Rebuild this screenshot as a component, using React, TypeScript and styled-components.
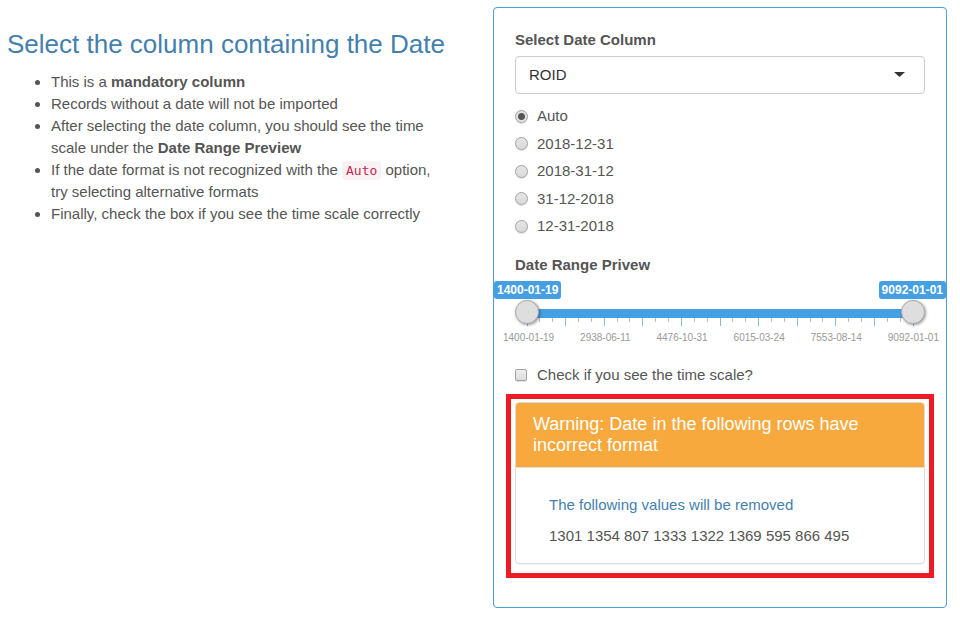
import React, { useState } from "react";
import styled, { createGlobalStyle } from "styled-components";

const GlobalStyle = createGlobalStyle`
  *, *::before, *::after { box-sizing: border-box; }
  body {
    margin: 0;
    background: #fff;
    color: #555;
    font-family: "Liberation Sans", Arial, sans-serif;
    font-size: 15px;
    line-height: 22px;
  }
  h2, h3, h4, p, ul, fieldset { margin: 0; padding: 0; border: 0; }
`;

const Page = styled.main`
  display: grid;
  grid-template-columns: minmax(0, 1fr) minmax(0, 1fr);
  align-items: start;
  gap: 32px;
  padding: 7px 13px 20px 7px;
`;

const Instructions = styled.section`
  padding-top: 22px;
`;

const Title = styled.h2`
  color: #447fae;
  font-size: 26px;
  font-weight: 400;
  line-height: 30px;
  white-space: nowrap;
`;

const Notes = styled.ul`
  && {
    margin-top: 12px;
    padding: 0 16px 0 44px;
  }
`;

const Code = styled.code`
  padding: 2px 4px;
  border-radius: 4px;
  background: #f9f2f4;
  color: #c7254e;
  font-family: "DejaVu Sans Mono", monospace;
  font-size: 13px;
  line-height: 16px;
`;

const Panel = styled.section`
  padding: 21px 21px 29px;
  border: 1px solid #4b9fdb;
  border-radius: 4px;
`;

const FieldLabel = styled.label`
  display: block;
  margin-bottom: 5px;
  font-weight: 700;
`;

const SelectBox = styled.div`
  display: grid;
  align-items: center;
`;

const Select = styled.select`
  grid-area: 1 / 1;
  appearance: none;
  width: 100%;
  height: 38px;
  padding: 0 40px 0 13px;
  border: 1px solid #ccc;
  border-radius: 4px;
  background: #fff;
  color: #333;
  font: inherit;
`;

const Caret = styled.svg`
  grid-area: 1 / 1;
  justify-self: end;
  margin: 0 20px 2px 0;
  pointer-events: none;
`;

const Formats = styled.fieldset`
  && {
    display: flex;
    flex-direction: column;
    justify-content: space-between;
    height: 132px;
    margin-top: 11px;
  }
`;

const Choice = styled.label`
  display: flex;
  align-items: center;
  gap: 9px;
`;

const Radio = styled.input`
  appearance: none;
  width: 13px;
  height: 13px;
  margin: 0;
  border: 1px solid #a3a3a3;
  border-radius: 50%;
  background: linear-gradient(#e6e6e6, #d9d9d9);
  box-shadow: 0 1px 1px #0002;

  &:checked {
    background: radial-gradient(circle, #555 0 3px, #e2e2e2 4px);
  }
`;

const Checkbox = styled.input`
  appearance: none;
  width: 12px;
  height: 12px;
  margin: 0 1px 0 0;
  border: 1px solid #a3a3a3;
  border-radius: 2px;
  background: linear-gradient(#eee, #dcdcdc);
  box-shadow: 0 1px 1px #0002;

  &:checked {
    background: #555;
  }
`;

const RangeGroup = styled.div`
  margin-top: 17px;
  margin-bottom: 19px;
`;

const Badges = styled.div`
  display: flex;
  justify-content: space-between;
  margin: 0 -21px;
`;

const Badge = styled.output`
  padding: 0 3px;
  border-radius: 3px;
  background: #459fe3;
  color: #fff;
  font-size: 12px;
  font-weight: 700;
  line-height: 18px;
`;

const Slider = styled.div`
  position: relative;
  z-index: 1;
  display: grid;
  align-items: center;
  height: 26px;
`;

const Track = styled.div`
  grid-area: 1 / 1;
  height: 9px;
  margin: 2px 12px 0;
  background: #459fe3;
`;

const Handle = styled.input`
  grid-area: 1 / 1;
  appearance: none;
  width: 100%;
  height: 26px;
  margin: 0;
  background: transparent;
  pointer-events: none;

  &::-webkit-slider-thumb {
    appearance: none;
    width: 24px;
    height: 24px;
    border: 1px solid #ababab;
    border-radius: 50%;
    background: #dedede;
    box-shadow: 1px 1px 3px #0006;
    pointer-events: auto;
  }
`;

const Ticks = styled.svg`
  display: block;
  width: calc(100% - 24px);
  height: 8px;
  margin: -7px 12px 0;
  overflow: visible;
`;

const ScaleLabels = styled.div`
  display: flex;
  justify-content: space-between;
  margin: 5px -14px 0 -12px;
  color: #999;
  font-size: 10px;
  line-height: 14px;
`;

const Highlight = styled.div`
  margin: 8px -9px 0;
  padding: 3px 4px 9px;
  border: 5px solid #ed1c24;
`;

const Warning = styled.article`
  overflow: hidden;
  border: 1px solid #ddd;
  border-radius: 4px;
  box-shadow: 0 1px 1px #0001;
`;

const WarningTitle = styled.h3`
  && {
    padding: 11px 17px;
  }
  border-bottom: 1px solid #ddd;
  background: #f8a93e;
  color: #fff;
  font-size: 18px;
  font-weight: 400;
  line-height: 21px;
`;

const WarningBody = styled.div`
  display: grid;
  gap: 9px;
  padding: 26px 33px 16px;
`;

const WarningLead = styled.h4`
  color: #447fae;
  font-size: 15px;
  font-weight: 400;
`;

const formats = ["Auto", "2018-12-31", "2018-31-12", "31-12-2018", "12-31-2018"];
const scale = ["1400-01-19", "2938-06-11", "4476-10-31", "6015-03-24", "7553-08-14", "9092-01-01"];
const tickCount = 30;

export default function App() {
  const [format, setFormat] = useState("Auto");

  return (
    <>
      <GlobalStyle />
      <Page>
        <Instructions>
          <Title>Select the column containing the Date</Title>
          <Notes>
            <li>This is a <b>mandatory column</b></li>
            <li>Records without a date will not be imported</li>
            <li>After selecting the date column, you should see the time scale under the <b>Date Range Preview</b></li>
            <li>If the date format is not recognized with the <Code>Auto</Code> option, try selecting alternative formats</li>
            <li>Finally, check the box if you see the time scale correctly</li>
          </Notes>
        </Instructions>

        <Panel>
          <FieldLabel htmlFor="date-column">Select Date Column</FieldLabel>
          <SelectBox>
            <Select id="date-column" defaultValue="ROID">
              <option>ROID</option>
            </Select>
            <Caret width="11" height="5" viewBox="0 0 11 5" aria-hidden="true">
              <path d="M0 0h11L5.5 5z" fill="#333" />
            </Caret>
          </SelectBox>

          <Formats aria-label="Date format">
            {formats.map((name) => (
              <Choice key={name}>
                <Radio
                  type="radio"
                  name="format"
                  value={name}
                  checked={format === name}
                  onChange={() => setFormat(name)}
                />
                {name}
              </Choice>
            ))}
          </Formats>

          <RangeGroup>
            <FieldLabel htmlFor="range-start">Date Range Privew</FieldLabel>
            <Badges>
              <Badge htmlFor="range-start">1400-01-19</Badge>
              <Badge htmlFor="range-end">9092-01-01</Badge>
            </Badges>
            <Slider>
              <Track />
              <Handle id="range-start" type="range" min={1400} max={9092} defaultValue={1400} />
              <Handle id="range-end" type="range" min={1400} max={9092} defaultValue={9092} aria-label="Range end" />
            </Slider>
            <Ticks aria-hidden="true">
              {Array.from({ length: tickCount + 1 }, (_, i) => {
                const x = `${(i / tickCount) * 100}%`;
                const major = i % 3 === 0;
                return (
                  <line
                    key={i}
                    x1={x}
                    x2={x}
                    y1="0"
                    y2={major ? 8 : 4}
                    stroke={major ? "#8db8dd" : "#bbb"}
                    shapeRendering="crispEdges"
                  />
                );
              })}
            </Ticks>
            <ScaleLabels>
              {scale.map((date) => (
                <span key={date}>{date}</span>
              ))}
            </ScaleLabels>
          </RangeGroup>

          <Choice>
            <Checkbox type="checkbox" />
            Check if you see the time scale?
          </Choice>

          <Highlight>
            <Warning>
              <WarningTitle>Warning: Date in the following rows have incorrect format</WarningTitle>
              <WarningBody>
                <WarningLead>The following values will be removed</WarningLead>
                <p>1301 1354 807 1333 1322 1369 595 866 495</p>
              </WarningBody>
            </Warning>
          </Highlight>
        </Panel>
      </Page>
    </>
  );
}
